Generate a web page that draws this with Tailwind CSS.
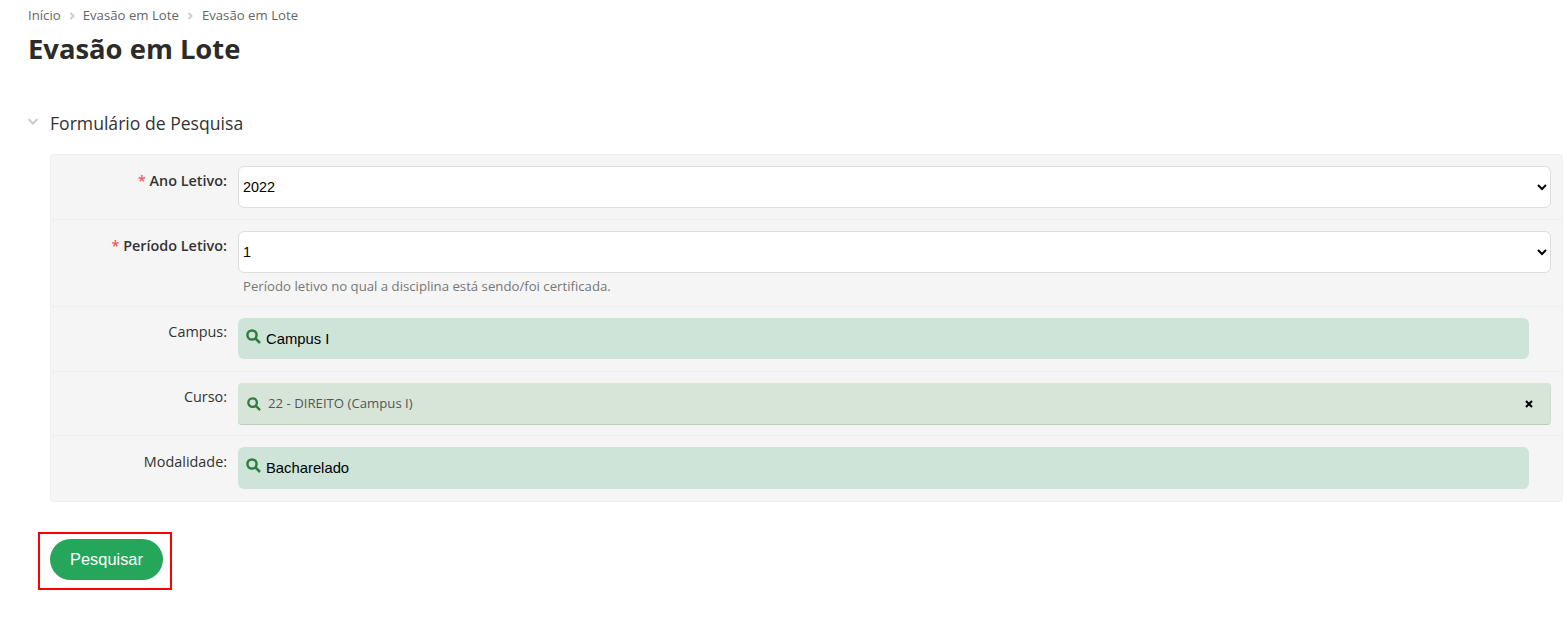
<!DOCTYPE html>
<html lang="en">
  <head>
    <meta charset="UTF-8" />
    <script src="https://cdn.jsdelivr.net/npm/@tailwindcss/browser@4"></script>
    <title>Evasão em Lote</title>
  </head>
  <body class="bg-white font-['Open_Sans',sans-serif] text-[#333] overflow-hidden">
    <div class="h-[618px] pl-[28px]">
      <!-- breadcrumb -->
      <nav class="flex items-center h-[15px] mt-[8px] text-[13.2px] leading-[15px] text-[#666]">
        <span>Início</span>
        <svg class="mx-[7px] w-[8px] h-[8px]" viewBox="0 0 8 8" fill="none" stroke="#ccc" stroke-width="2"><path d="M2.500 1l3 3-3 3" /></svg>
        <span>Evasão em Lote</span>
        <svg class="ml-[7px] mr-[8px] w-[8px] h-[8px]" viewBox="0 0 8 8" fill="none" stroke="#ccc" stroke-width="2"><path d="M2.500 1l3 3-3 3" /></svg>
        <span>Evasão em Lote</span>
      </nav>
      <h1 class="mt-[6px] text-[27.4px] leading-[40px] font-bold text-[#2b2b2b]">Evasão em Lote</h1>

      <!-- form section -->
      <div class="flex items-center mt-[42px] h-[24px]">
        <svg class="w-[10px] h-[7px] mr-[12px] -mt-[4px]" viewBox="0 0 10 7" fill="none" stroke="#ccc" stroke-width="2"><path d="M.5 1l4.500 4.500L9.500 1" /></svg>
        <h2 class="text-[17.6px] leading-[24px] text-[#333]">Formulário de Pesquisa</h2>
      </div>

      <div class="ml-[22px] mt-[19px] border border-[#eee] rounded-[4px] bg-[#f5f5f5] text-[14.4px]">
        <div class="flex h-[65px] border-b border-[#eee] pt-[11px]">
          <label class="w-[176px] text-right font-semibold leading-[28px] pt-[1px]"><span class="text-[#f05a5a]">*</span> Ano Letivo:</label>
          <div class="ml-[11px] w-[1313px]">
            <select class="w-full h-[42px] bg-white border border-[#ddd] rounded-[6px] font-['Liberation_Sans',sans-serif] text-[14.4px] text-black"><option>2022</option></select>
          </div>
        </div>
        <div class="flex h-[87px] border-b border-[#eee] pt-[11px]">
          <label class="w-[176px] text-right font-semibold leading-[28px] pt-[1px]"><span class="text-[#f05a5a]">*</span> Período Letivo:</label>
          <div class="ml-[11px] w-[1313px]">
            <select class="w-full h-[42px] bg-white border border-[#ddd] rounded-[6px] font-['Liberation_Sans',sans-serif] text-[14.4px] text-black"><option>1</option></select>
            <p class="ml-[5px] mt-[4px] text-[13.2px] leading-[18px] text-[#777]">Período letivo no qual a disciplina está sendo/foi certificada.</p>
          </div>
        </div>
        <div class="flex h-[65px] border-b border-[#eee] pt-[11px]">
          <label class="w-[176px] text-right leading-[28px]">Campus:</label>
          <div class="ml-[11px] w-[1291px] h-[41px] flex items-center bg-[#cfe4d8] rounded-[6px] font-['Liberation_Sans',sans-serif] text-[14.8px] text-black">
            <svg class="ml-[8px] mr-[5px] -mt-[5px] w-[15px] h-[15px]" viewBox="0 0 15 15" fill="none" stroke="#2f7d3f" stroke-width="2.500"><circle cx="6" cy="6" r="4.600" /><path d="M9.500 9.500L14 14" /></svg>
            <span class="pt-[1px]">Campus I</span>
          </div>
        </div>
        <div class="flex h-[64px] border-b border-[#eee] pt-[11px]">
          <label class="w-[176px] text-right leading-[28px]">Curso:</label>
          <div class="ml-[11px] w-[1313px] h-[42px] flex items-center bg-[#d7e5d9] rounded-[4px] border-r border-b border-r-[#cfdcd2] border-b-[#b9cfbd] text-[13.2px] text-[#555]">
            <svg class="ml-[9px] mr-[7px] w-[14px] h-[14px]" viewBox="0 0 15 15" fill="none" stroke="#2f7d3f" stroke-width="2.500"><circle cx="6" cy="6" r="4.600" /><path d="M9.500 9.500L14 14" /></svg>
            <span>22 - DIREITO (Campus I)</span>
            <svg class="ml-auto mr-[17px] w-[8px] h-[8px]" viewBox="0 0 8 8" fill="none" stroke="#000" stroke-width="2"><path d="M1 1l6 6M7 1L1 7" /></svg>
          </div>
        </div>
        <div class="flex h-[65px] pt-[11px]">
          <label class="w-[176px] text-right leading-[28px] pt-[1px]">Modalidade:</label>
          <div class="ml-[11px] w-[1291px] h-[42px] flex items-center bg-[#cfe4d8] rounded-[6px] font-['Liberation_Sans',sans-serif] text-[14.8px] text-black">
            <svg class="ml-[8px] mr-[5px] -mt-[5px] w-[15px] h-[15px]" viewBox="0 0 15 15" fill="none" stroke="#2f7d3f" stroke-width="2.500"><circle cx="6" cy="6" r="4.600" /><path d="M9.500 9.500L14 14" /></svg>
            <span>Bacharelado</span>
          </div>
        </div>
      </div>

      <!-- action highlighted in red -->
      <div class="ml-[10px] mt-[30px] w-[134px] h-[58px] border-2 border-[#f00] flex items-start pt-[5px] pl-[10px]">
        <button class="w-[113px] h-[41px] rounded-full bg-[#26a65b] text-white font-['Liberation_Sans',sans-serif] text-[16.4px]">Pesquisar</button>
      </div>
    </div>
  </body>
</html>
